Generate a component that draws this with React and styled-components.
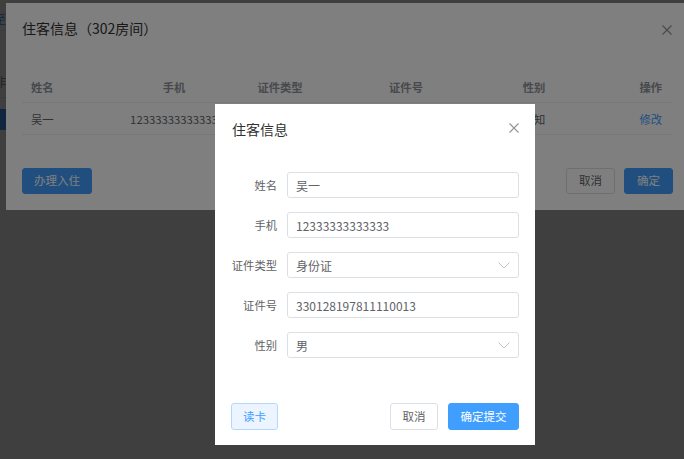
import React from "react";
import styled, { createGlobalStyle } from "styled-components";

const GlobalStyle = createGlobalStyle`
  html, body {
    margin: 0;
    padding: 0;
    overflow: hidden;
    background: #ffffff;
  }
  body {
    font-family: "Noto Sans CJK SC", "Noto Sans", sans-serif;
    color: #606266;
  }
`;

const colors = {
  primary: "#409eff",
  title: "#303133",
  text: "#606266",
  muted: "#909399",
  border: "#dcdfe6",
  line: "#ebeef5",
  placeholder: "#c0c4cc",
};

const Page = styled.div`
  width: 684px;
  height: 459px;
  background: #ffffff;
  display: flex;
  flex-direction: column;
  gap: 0;
`;

const PageLink = styled.div`
  margin: 12px 0 0 -6px;
  height: 14px;
  font-size: 12px;
  line-height: 14px;
  color: ${colors.primary};
  border-bottom: 1px solid ${colors.line};
  padding-bottom: 4px;
`;

const PageHead = styled.div`
  margin: 42px 0 0 -6px;
  font-size: 12px;
  line-height: 18px;
  color: ${colors.muted};
  padding-bottom: 6px;
  border-bottom: 1px solid ${colors.line};
`;

const PageBar = styled.div`
  margin-top: 11px;
  width: 40px;
  height: 21px;
  background: ${colors.primary};
`;

const Overlay = styled.div`
  position: fixed;
  inset: 0;
  background: rgba(0, 0, 0, 0.5);
`;

const Dialog = styled.div`
  position: fixed;
  left: ${(p) => p.$left}px;
  top: ${(p) => p.$top}px;
  width: ${(p) => p.$width}px;
  background: #ffffff;
  display: flex;
  flex-direction: column;
  box-sizing: border-box;
  padding: 0 16px ${(p) => p.$bottom}px;
`;

const Header = styled.div`
  display: flex;
  align-items: center;
  justify-content: space-between;
  padding-top: 15px;
  height: 20px;
`;

const Title = styled.div`
  font-size: 14px;
  line-height: 20px;
  color: ${colors.title};
  padding-left: ${(p) => p.$indent || 0}px;
`;

const Close = styled.svg`
  width: 10px;
  height: 10px;
  margin-right: ${(p) => p.$right || 0}px;
  margin-top: ${(p) => p.$top || 0}px;
`;

const CloseIcon = ({ right, top }) => (
  <Close viewBox="0 0 10 10" $right={right} $top={top}>
    <path d="M0.5 0.5 L9.5 9.5 M9.5 0.5 L0.5 9.5" stroke={colors.muted} strokeWidth="1.1" fill="none" />
  </Close>
);

const Table = styled.div`
  margin-top: 34px;
  display: flex;
  flex-direction: column;
  font-size: 11.3px;
`;

const Row = styled.div`
  display: grid;
  grid-template-columns: 98px 108px 104px 148px 108px 1fr;
  align-items: center;
  height: ${(p) => (p.$head ? 30 : 31)}px;
  border-bottom: 1px solid ${colors.line};
  color: ${(p) => (p.$head ? colors.muted : colors.text)};
  font-weight: ${(p) => (p.$head ? 700 : 400)};
`;

const Cell = styled.div`
  text-align: ${(p) => p.$align || "center"};
  padding-left: ${(p) => (p.$align === "left" ? 9 : 0)}px;
  padding-right: ${(p) => (p.$align === "right" ? 11 : 0)}px;
  white-space: nowrap;
  color: ${(p) => (p.$link ? colors.primary : "inherit")};
  font-weight: ${(p) => (p.$link ? 400 : "inherit")};
`;

const Footer = styled.div`
  display: flex;
  align-items: center;
  gap: ${(p) => p.$gap}px;
  margin-top: ${(p) => p.$top}px;
`;

const Spacer = styled.div`
  flex: 1;
`;

const variants = {
  primary: { bg: colors.primary, border: colors.primary, color: "#ffffff" },
  plain: { bg: "#ffffff", border: colors.border, color: colors.text },
  light: { bg: "#ecf5ff", border: "#b3d8ff", color: colors.primary },
};

const Button = styled.button`
  box-sizing: border-box;
  width: ${(p) => p.$w}px;
  height: ${(p) => p.$h}px;
  padding: 0;
  border-radius: 3px;
  border: 1px solid ${(p) => variants[p.$kind].border};
  background: ${(p) => variants[p.$kind].bg};
  color: ${(p) => variants[p.$kind].color};
  font-family: inherit;
  font-size: 11.5px;
  line-height: 1;
`;

const Form = styled.div`
  display: flex;
  flex-direction: column;
  gap: 14px;
  margin-top: 33px;
`;

const Field = styled.div`
  display: flex;
  align-items: center;
`;

const Label = styled.div`
  width: 46px;
  padding-right: 10px;
  text-align: right;
  font-size: 11.3px;
  color: ${colors.text};
  white-space: nowrap;
`;

const Input = styled.div`
  box-sizing: border-box;
  width: 232px;
  height: 26px;
  border: 1px solid ${colors.border};
  border-radius: 3px;
  display: flex;
  align-items: center;
  justify-content: space-between;
  padding: 0 8px 0 8px;
  font-size: 12px;
  color: ${colors.text};
`;

const Chevron = () => (
  <svg width="12" height="7" viewBox="0 0 12 7">
    <polyline points="0.5,0.5 6,6 11.5,0.5" fill="none" stroke={colors.placeholder} strokeWidth="1" />
  </svg>
);

const guests = [
  { name: "吴一", phone: "12333333333333", type: "身份证", id: "330128197811110013", sex: "未知" },
];

const fields = [
  { label: "姓名", value: "吴一" },
  { label: "手机", value: "12333333333333" },
  { label: "证件类型", value: "身份证", select: true },
  { label: "证件号", value: "330128197811110013" },
  { label: "性别", value: "男", select: true },
];

export default function App() {
  return (
    <>
      <GlobalStyle />
      <Page>
        <PageLink>至</PageLink>
        <PageHead>非</PageHead>
        <PageBar />
      </Page>
      <Overlay />
      <Dialog $left={6} $top={3} $width={683} $bottom={16}>
        <Header>
          <Title>住客信息（302房间）</Title>
          <CloseIcon right={1} top={4} />
        </Header>
        <Table>
          <Row $head>
            <Cell $align="left">姓名</Cell>
            <Cell>手机</Cell>
            <Cell>证件类型</Cell>
            <Cell>证件号</Cell>
            <Cell>性别</Cell>
            <Cell $align="right">操作</Cell>
          </Row>
          {guests.map((g) => (
            <Row key={g.id}>
              <Cell $align="left">{g.name}</Cell>
              <Cell>{g.phone}</Cell>
              <Cell>{g.type}</Cell>
              <Cell>{g.id}</Cell>
              <Cell>{g.sex}</Cell>
              <Cell $align="right" $link>
                修改
              </Cell>
            </Row>
          ))}
        </Table>
        <Footer $gap={9} $top={33}>
          <Button $kind="primary" $w={70} $h={26}>
            办理入住
          </Button>
          <Spacer />
          <Button $kind="plain" $w={49} $h={26}>
            取消
          </Button>
          <Button $kind="primary" $w={49} $h={26}>
            确定
          </Button>
        </Footer>
      </Dialog>
      <Overlay />
      <Dialog $left={215} $top={104} $width={320} $bottom={15}>
        <Header>
          <Title $indent={1}>住客信息</Title>
          <CloseIcon right={0} top={-2} />
        </Header>
        <Form>
          {fields.map((f) => (
            <Field key={f.label}>
              <Label>{f.label}</Label>
              <Input>
                <span>{f.value}</span>
                {f.select && <Chevron />}
              </Input>
            </Field>
          ))}
        </Form>
        <Footer $gap={10} $top={45}>
          <Button $kind="light" $w={47} $h={27}>
            读卡
          </Button>
          <Spacer />
          <Button $kind="plain" $w={48} $h={27}>
            取消
          </Button>
          <Button $kind="primary" $w={71} $h={27}>
            确定提交
          </Button>
        </Footer>
      </Dialog>
    </>
  );
}
